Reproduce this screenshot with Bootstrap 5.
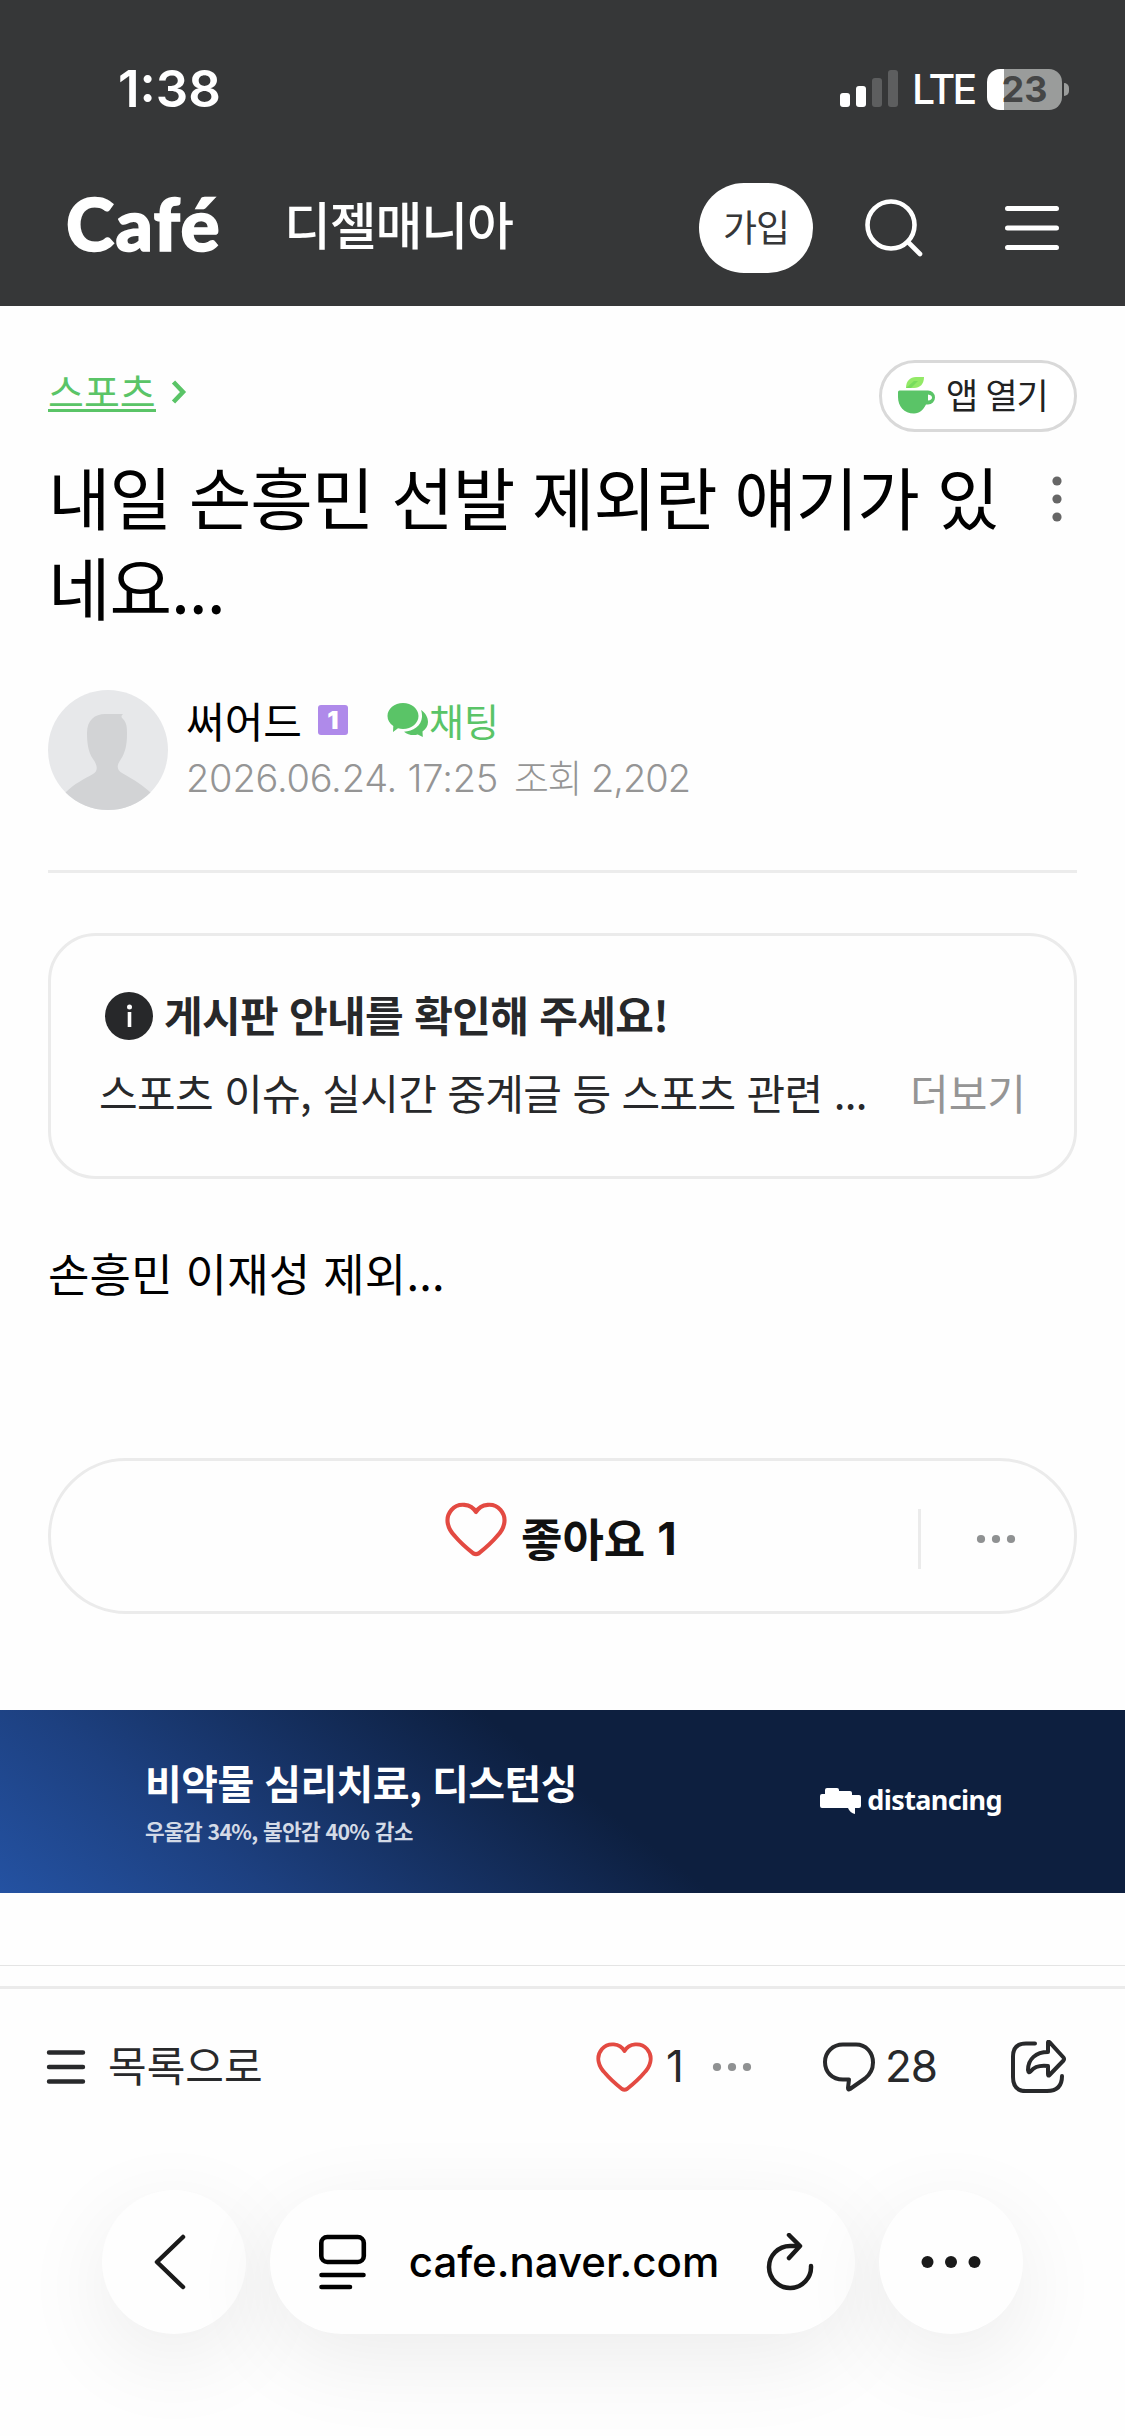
<!DOCTYPE html>
<html lang="ko">
<head>
<meta charset="utf-8">
<meta name="viewport" content="width=device-width, initial-scale=1">
<title>디젤매니아</title>
<link rel="stylesheet" href="https://cdn.jsdelivr.net/npm/bootstrap@5.3.0/dist/css/bootstrap.min.css">
<style>
body{font-family:"Noto Sans CJK KR",sans-serif;color:#000;background:#fefefe;width:1125px;height:2436px;overflow:hidden;line-height:1}
svg{display:block;flex:none}
.t{white-space:nowrap;flex:none;display:block}
.inter{font-family:Inter,"Noto Sans CJK KR",sans-serif}
.site-head{height:306px;background:#363738;color:#fff}
.status-row{height:90px;margin-top:44px;padding:0 56px 0 118px}
.clock{font-size:51px;font-weight:600;line-height:90px}
.lte{font-size:41px;font-weight:500;line-height:90px;letter-spacing:-2.8px;margin-left:14px;width:60px}
.batt{width:75px;height:41px;border-radius:13px;background:linear-gradient(90deg,#fff 17px,#9a9c9b 17px);color:#454646;font-size:36px;font-weight:700;line-height:41px;text-align:center;margin-left:15px}
.batt-nub{width:5px;height:13px;border-radius:0 5px 5px 0;background:#9a9c9b;margin-left:2px}
.brand-row{height:90px;margin-top:49px;padding:0 66px 0 66px}
.brand{font-family:Lato,sans-serif;font-weight:900;font-size:73px;line-height:80px;height:90px;width:218px;letter-spacing:1.4px;-webkit-text-stroke:1.6px #fff}
.cafe-name{font-size:51px;font-weight:500;line-height:80px;height:90px;letter-spacing:-1.2px}
.join{width:114px;height:90px;border-radius:45px;background:#fff;color:#363738;font-size:37px;line-height:86px;letter-spacing:-1px;text-align:center}
.post-top{height:72px;margin-top:54px;padding:0 48px}
.cat{color:#5ac467;font-size:39px;height:63px}
.cat span.t{border-bottom:3px solid #5ac467;line-height:38px;height:41px;margin-bottom:0}
.app-btn{width:198px;height:72px;border:3px solid #d9d9d9;border-radius:36px;background:#fff;padding-left:16px;color:#222}
.app-btn .t{font-size:35px;line-height:62px;height:66px;margin-left:10px;letter-spacing:-1.2px}
.title-row{margin-top:19px;padding:0 48px;height:182px}
.post-title{font-size:68px;line-height:90px;font-weight:400;margin:0;letter-spacing:-1.1px;width:970px;white-space:nowrap}
.author{padding:0 48px;margin-top:57px;height:120px}
.nick{font-size:42px;line-height:54px}
.lv{width:30px;height:30px;border-radius:3px;background:#af8aea;color:#fff;font:900 25px/30px Inter,sans-serif;text-align:center}
.chat{font-size:38px;color:#5ac467;line-height:54px}
.date{font-size:38px;font-weight:300;color:#959595;line-height:48px;margin-top:7px;letter-spacing:-.2px}
.rule{height:3px;background:#ececec;margin:60px 48px 0}
.notice{margin:60px 48px 0;height:246px;border:3px solid #ebebeb;border-radius:48px;color:#27282a;padding:50px 48px 0}
.notice .t{font-size:42px;line-height:60px;letter-spacing:-.65px}
.notice strong.t{line-height:56px;height:60px}
.body-text{margin:62px 48px 0;font-size:45px;line-height:64px;height:67px;letter-spacing:.2px}
.like-box{margin:150px 48px 0;height:156px;border:3px solid #ebebeb;border-radius:78px}
.like-main{width:867px;padding-left:394px;height:150px}
.like-main .t{font-size:45px;font-weight:700;color:#111;line-height:60px;margin-top:3px}
.ad{margin-top:96px;height:183px;background:linear-gradient(38deg,#2452a2 0,#1d4080 20%,#0d1f3f 52.5%);color:#fff;padding:0 123px 0 145px}
.ad-title{font-size:40px;font-weight:700;line-height:48px;letter-spacing:-.6px}
.ad-sub{font-size:21.4px;font-weight:700;line-height:28px;color:#d3dae6;letter-spacing:-.65px}
.ad-logo{font-family:"Noto Sans",sans-serif;font-weight:700;font-size:27px;line-height:34px;letter-spacing:-.6px;margin-bottom:3px}
.thin{margin-top:72px;height:1px;background:#e4e4e4}
.tools{margin-top:20px;border-top:3px solid #ebebeb;height:204px;color:#28292b;padding:33px 59px 0 46px}
.tools .row-in{height:90px}
.tools .t{font-size:42px;line-height:60px}
.tools .num{font-size:44px;margin-bottom:2px}
.browser{padding:0 102px;gap:24px;height:144px}
.glass{height:144px;border-radius:72px;background:#fefefe;box-shadow:0 24px 90px rgba(0,0,0,.075)}
.round{width:144px}
.url{width:585px;padding:0 41px 0 49px}
.url .t{font-size:42px;font-weight:500;color:#000;line-height:60px;margin-right:5px}
</style>
</head>
<body>
<header class="site-head d-flex flex-column">
  <div class="status-row d-flex align-items-center inter">
    <span class="t clock">1:38</span>
    <svg class="ms-auto" width="58" height="38" viewBox="0 0 58 38"><g fill="#fff"><rect x="0" y="23" width="10" height="14" rx="3"/><rect x="16" y="16" width="10" height="21" rx="3"/></g><g fill="#5d5e5f"><rect x="32" y="8" width="10" height="29" rx="3"/><rect x="48" y="0" width="10" height="37" rx="3"/></g></svg>
    <span class="t lte">LTE</span>
    <span class="t batt">23</span><span class="batt-nub"></span>
  </div>
  <div class="brand-row d-flex align-items-center">
    <span class="t brand">Café</span>
    <span class="t cafe-name">디젤매니아</span>
    <span class="t join ms-auto">가입</span>
    <svg style="margin-left:51px" width="60" height="60" viewBox="0 0 60 60" fill="none" stroke="#fff" stroke-width="4.6" stroke-linecap="round"><circle cx="27" cy="27" r="23.5"/><path d="M44 44l12 12"/></svg>
    <svg style="margin-left:81px" width="54" height="46" viewBox="0 0 54 46" fill="none" stroke="#fff" stroke-width="5" stroke-linecap="round"><path d="M2.5 3.500h49M2.500 23h49M2.500 42.500h49"/></svg>
  </div>
</header>
<main>
  <div class="post-top d-flex justify-content-between">
    <div class="cat d-flex align-items-center"><span class="t">스포츠</span><svg style="margin-left:15px" width="16" height="24" viewBox="0 0 16 24" fill="none" stroke="#5ac467" stroke-width="4.500"><path d="M2.500 2l9.500 10-9.500 10"/></svg></div>
    <div class="app-btn d-flex align-items-center">
      <svg width="38" height="38" viewBox="0 0 38 38"><path d="M8 11C8 4 12 0 18 0h8c0 7-4 11-10 11z" fill="#93e967"/><path d="M8 11l8-7 4 0-7 7z" fill="#77dc5c"/><path fill="#5ac467" fill-rule="evenodd" d="M0 15Q0 13.500 1.500 13.500H30a7 7 0 0 1 0 14h-2C25 33 22 36.500 16 36.500 6 36.500 0 29 0 20zM30 17.500v6q4-.5 4-3t-4-3z"/></svg>
      <span class="t">앱 열기</span>
    </div>
  </div>
  <div class="title-row d-flex justify-content-between">
    <h1 class="post-title">내일 손흥민 선발 제외란 얘기가 있<br>네요...</h1>
    <svg style="margin:25px 15px 0 0" width="10" height="46" viewBox="0 0 10 46" fill="#666"><circle cx="5" cy="5" r="4.600"/><circle cx="5" cy="23" r="4.600"/><circle cx="5" cy="41" r="4.600"/></svg>
  </div>
  <div class="author d-flex">
    <svg width="120" height="120" viewBox="0 0 120 120"><defs><clipPath id="av"><circle cx="60" cy="60" r="60"/></clipPath></defs><g clip-path="url(#av)"><path fill="#e7e8ea" d="M0 0h120v120H0z"/><path fill="#d2d3d5" d="M57 24h18c-2 2-2 3 0 5 4 4 4 9 4 15 0 11-2 19-6 25-5 7-4 11 1 14 12 7 21 12 30 21l8 16H8l10-18c8-8 18-13 27-18 5-3 5-8 0-15-5-7-6-17-6-26 0-13 8-19 18-19z"/></g></svg>
    <div style="margin-left:18px;padding-top:3px">
      <div class="d-flex align-items-center">
        <span class="t nick">써어드</span><span class="t lv" style="margin-left:16px">1</span>
        <svg style="margin-left:39px" width="42" height="36" viewBox="0 0 42 36" fill="#5ac467"><path d="M16 1c8.600 0 15.500 5.800 15.500 13S24.600 27 16 27q-2.500 0-5-.8L6 30l.3-6C2.600 21.500.5 18 .5 14 .5 6.800 7.400 1 16 1z"/><path d="M34 8c4 2.500 7 7 7 12 0 4-2 7-5.500 9.500L35.800 35l-5-2.500c-5 1.300-10 .3-13.800-2.800 9-.2 17.500-6 18-14.700.1-2.500-.2-5-1-7z"/></svg>
        <span class="t chat">채팅</span>
      </div>
      <div class="d-flex date inter"><span class="t" style="width:328px">2026.06.24. 17:25</span><span class="t" style="width:77px;letter-spacing:-1.5px">조회</span><span class="t" style="letter-spacing:-1px">2,202</span></div>
    </div>
  </div>
  <div class="rule"></div>
  <section class="notice">
    <div class="d-flex align-items-center"><svg style="margin-left:6px" width="48" height="48" viewBox="0 0 48 48"><circle cx="24" cy="24" r="24" fill="#27282a"/><circle cx="24.500" cy="15" r="2.500" fill="#fff"/><path d="M24.500 20v15" stroke="#fff" stroke-width="3.600"/></svg><strong class="t" style="margin-left:11px">게시판 안내를 확인해 주세요!</strong></div>
    <div class="d-flex justify-content-between" style="margin-top:16px"><span class="t">스포츠 이슈, 실시간 중계글 등 스포츠 관련 ...</span><span class="t" style="color:#959595;letter-spacing:0">더보기</span></div>
  </section>
  <p class="body-text t">손흥민 이재성 제외...</p>
  <div class="like-box d-flex align-items-center">
    <div class="like-main d-flex align-items-center">
      <svg style="margin-bottom:12px" width="62" height="56" viewBox="0 0 57 51" fill="none" stroke="#e34a42" stroke-width="3.800" stroke-linejoin="round"><path d="M28.500 9C24 1 12 0 6 7c-7 8-3 18 3 24 5 6 12 12 17 16q2.500 1.500 5 0c5-4 12-10 17-16 6-6 10-16 3-24-6-7-18-6-22.500 2z"/></svg>
      <span class="t" style="margin-left:14px">좋아요</span><span class="t inter" style="margin-left:12px;margin-top:6px">1</span>
    </div>
    <span style="width:3px;height:60px;background:#ebebeb;margin-top:6px"></span>
    <svg style="margin:6px 0 0 55px" width="40" height="10" viewBox="0 0 40 10" fill="#8f9192"><circle cx="5" cy="5" r="4.100"/><circle cx="20" cy="5" r="4.100"/><circle cx="35" cy="5" r="4.100"/></svg>
  </div>
  <section class="ad d-flex align-items-center justify-content-between">
    <div style="padding-bottom:1px"><div class="t ad-title">비약물 심리치료, 디스턴싱</div><div class="t ad-sub" style="margin-top:11px">우울감 34%, 불안감 40% 감소</div></div>
    <div class="d-flex align-items-center"><svg style="margin-bottom:1px" width="42" height="26" viewBox="0 0 42 26" fill="#fff"><path d="M2 6h3V2q0-2 2-2h10q2 0 2 2v1h11q2 0 2 2v2h7q2 0 2 2v9q0 2-2 2h-4v6q-5-1-7-6H2q-2 0-2-2V8q0-2 2-2z"/></svg><span class="t ad-logo" style="margin-left:5px">distancing</span></div>
  </section>
  <div class="thin"></div>
</main>
<footer>
  <div class="tools">
    <div class="row-in d-flex align-items-center">
      <svg width="40" height="36" viewBox="0 0 40 36" fill="none" stroke="#28292b" stroke-width="4.400" stroke-linecap="round"><path d="M3 3.500h34M3 18h34M3 32.500h34"/></svg>
      <span class="t" style="margin-left:22px;margin-bottom:6px">목록으로</span>
      <svg class="ms-auto" width="57" height="51" viewBox="0 0 57 51" fill="none" stroke="#e34a42" stroke-width="3.800" stroke-linejoin="round"><path d="M28.500 9C24 1 12 0 6 7c-7 8-3 18 3 24 5 6 12 12 17 16q2.500 1.500 5 0c5-4 12-10 17-16 6-6 10-16 3-24-6-7-18-6-22.500 2z"/></svg>
      <span class="t num inter" style="margin-left:13px;width:46px">1</span>
      <svg width="40" height="10" viewBox="0 0 40 10" fill="#8f9192"><circle cx="5" cy="5" r="4.100"/><circle cx="20" cy="5" r="4.100"/><circle cx="35" cy="5" r="4.100"/></svg>
      <svg style="margin-left:70px" width="54" height="52" viewBox="0 0 54 52" fill="none" stroke="#28292b" stroke-width="4" stroke-linejoin="round"><path d="M21 3.500h13c10 0 17 8 17 18 0 7-3 12-8 16L28 48q-2 1.500-2-1l1-8.500H21C10 38.500 3 31 3 21S11 3.500 21 3.500z"/></svg>
      <span class="t num inter" style="margin-left:9px;width:52px;letter-spacing:-1px">28</span>
      <svg style="margin-left:73px" width="56" height="54" viewBox="0 0 56 54" fill="none" stroke="#28292b" stroke-width="4" stroke-linecap="round" stroke-linejoin="round"><path d="M25 3.500H16Q3 3.500 3 16.500V37Q3 51 16 51H37Q52 51 52 36"/><path d="M38 2.500q0-1.500 1.500-.3L53.500 17.500q1 1.500 0 3L39.500 35q-1.500 1.500-1.500-1V26C29 25 24 27 21 31q-2.500 3-3-1C18 19 26 12 38 12z"/></svg>
    </div>
  </div>
  <div class="browser d-flex">
    <div class="glass round d-flex align-items-center justify-content-center"><svg style="margin-right:9px" width="34" height="58" viewBox="0 0 34 58" fill="none" stroke="#1a1a1a" stroke-width="4.500" stroke-linecap="round" stroke-linejoin="round"><path d="M30 4L4 29l26 25"/></svg></div>
    <div class="glass url d-flex align-items-center justify-content-between">
      <svg width="48" height="56" viewBox="0 0 48 56" fill="none" stroke="#000" stroke-width="4.600" stroke-linecap="round"><rect x="2.300" y="3" width="42.500" height="25" rx="6"/><path d="M2.500 41h42M2.500 53h28.500"/></svg>
      <span class="t inter">cafe.naver.com</span>
      <svg width="48" height="58" viewBox="0 0 48 58" fill="none" stroke="#1a1a1a" stroke-width="4.500" stroke-linecap="round" stroke-linejoin="round"><path d="M45 33A21 21 0 1 1 24 13h9"/><path d="M23 2l11 11-11 12"/></svg>
    </div>
    <div class="glass round d-flex align-items-center justify-content-center"><svg width="62" height="14" viewBox="0 0 62 14" fill="#1a1a1a"><circle cx="7.500" cy="7" r="6"/><circle cx="31" cy="7" r="6"/><circle cx="54.500" cy="7" r="6"/></svg></div>
  </div>
</footer>
<script src="https://cdn.jsdelivr.net/npm/bootstrap@5.3.0/dist/js/bootstrap.bundle.min.js"></script>
</body>
</html>
